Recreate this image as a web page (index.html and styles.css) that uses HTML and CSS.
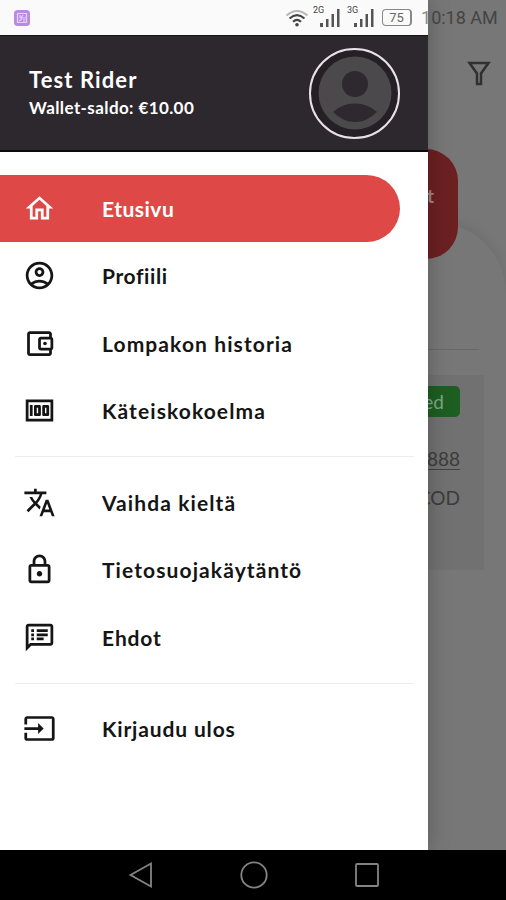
FILE: index.html
```html
<!DOCTYPE html>
<html lang="fi">
<head>
  <meta charset="UTF-8" />
  <meta name="viewport" content="width=device-width, initial-scale=1.0"/>
  <title>Etusivu</title>
  <link rel="stylesheet" href="styles.css">
</head>
<body>
  <div class="screen">

    <!-- page behind the drawer -->
    <main class="page">
      <div class="toolbar">
        <svg class="filter" viewBox="0 0 24 26"><path d="M2.500 3h19L14 13.500V24h-4V13.500z"/></svg>
      </div>
      <div class="tab">t</div>
      <div class="sheet">
        <div class="line"></div>
        <div class="card">
          <span class="status">Completed</span>
          <span class="phone">888888</span>
          <span class="payment">COD</span>
        </div>
      </div>
    </main>

    <aside class="drawer">
      <div class="status-space"></div>
      <header class="user">
        <div>
          <div class="name">Test Rider</div>
          <div class="wallet">Wallet-saldo: €10.00</div>
        </div>
        <div class="avatar">
          <svg viewBox="0 0 74 74">
            <circle cx="37" cy="37" r="36.500" fill="#4b494c"/>
            <circle cx="37" cy="28" r="13" fill="#2e282f"/>
            <path d="M15 56Q24 47.500 37 47.500T59 56Q49 66 37 66T15 56z" fill="#2e282f"/>
          </svg>
        </div>
      </header>

      <nav class="menu">
        <a class="item active">
          <svg viewBox="0 0 24 24"><path d="M12 5.690l5 4.500V18h-2v-6H9v6H7v-7.810l5-4.500M12 3L2 12h3v8h6v-6h2v6h6v-8h3L12 3z"/></svg>
          <span class="t-home">Etusivu</span>
        </a>
        <a class="item">
          <svg viewBox="0 0 24 24"><path d="M12 2C6.480 2 2 6.480 2 12s4.480 10 10 10 10-4.480 10-10S17.520 2 12 2zM7.350 18.500C8.660 17.560 10.260 17 12 17s3.340.56 4.650 1.500C15.340 19.440 13.740 20 12 20s-3.340-.56-4.650-1.500zm10.790-1.380C16.450 15.800 14.320 15 12 15s-4.450.8-6.140 2.120C4.700 15.730 4 13.950 4 12c0-4.420 3.580-8 8-8s8 3.580 8 8c0 1.950-.7 3.730-1.860 5.120zM12 6c-1.930 0-3.500 1.570-3.500 3.500S10.070 13 12 13s3.500-1.570 3.500-3.500S13.930 6 12 6zm0 5c-.83 0-1.500-.67-1.500-1.500S11.170 8 12 8s1.500.67 1.500 1.500S12.830 11 12 11z"/></svg>
          <span class="t-profile">Profiili</span>
        </a>
        <a class="item">
          <svg viewBox="0 0 24 24"><path d="M21 7.280V5c0-1.100-.9-2-2-2H5c-1.110 0-2 .9-2 2v14c0 1.100.89 2 2 2h14c1.100 0 2-.9 2-2v-2.280c.59-.35 1-.98 1-1.720V9c0-.74-.41-1.370-1-1.720zM20 9v6h-7V9h7zM5 19V5h14v2h-6c-1.100 0-2 .9-2 2v6c0 1.100.9 2 2 2h6v2H5z"/><circle cx="16" cy="12" r="1.300"/></svg>
          <span class="t-history">Lompakon historia</span>
        </a>
        <a class="item">
          <svg viewBox="0 0 24 24"><path d="M5 8h2v8H5zM12 8H9c-.55 0-1 .45-1 1v6c0 .55.45 1 1 1h3c.55 0 1-.45 1-1V9c0-.55-.45-1-1-1zm-1 6h-1v-4h1v4zM18 8h-3c-.55 0-1 .45-1 1v6c0 .55.450 1 1 1h3c.55 0 1-.45 1-1V9c0-.55-.45-1-1-1zm-1 6h-1v-4h1v4zM2 4v16h20V4H2zm2 14V6h16v12H4z"/></svg>
          <span class="t-cash">Käteiskokoelma</span>
        </a>
        <hr>
        <a class="item">
          <svg viewBox="0 0 24 24"><path d="M12.870 15.070l-2.540-2.510.03-.03c1.740-1.940 2.980-4.170 3.710-6.530H17V4h-7V2H8v2H1v1.990h11.170C11.500 7.920 10.440 9.750 9 11.350 8.070 10.320 7.300 9.190 6.690 8h-2c.73 1.630 1.730 3.170 2.980 4.560l-5.090 5.020L4 19l5-5 3.110 3.110.76-2.040zM18.500 10h-2L12 22h2l1.120-3h4.750L21 22h2l-4.500-12zm-2.620 7l1.620-4.330L19.120 17h-3.240z"/></svg>
          <span class="t-language">Vaihda kieltä</span>
        </a>
        <a class="item">
          <svg viewBox="0 0 24 24"><path d="M18 8h-1V6c0-2.760-2.240-5-5-5S7 3.240 7 6v2H6c-1.100 0-2 .9-2 2v10c0 1.100.9 2 2 2h12c1.100 0 2-.9 2-2V10c0-1.100-.9-2-2-2zM9 6c0-1.660 1.340-3 3-3s3 1.340 3 3v2H9V6zm9 14H6V10h12v10zm-6-3c1.100 0 2-.9 2-2s-.9-2-2-2-2 .9-2 2 .9 2 2 2z"/></svg>
          <span class="t-privacy">Tietosuojakäytäntö</span>
        </a>
        <a class="item">
          <svg viewBox="0 0 24 24"><path d="M20 2H4c-1.100 0-1.990.9-1.990 2L2 22l4-4h14c1.100 0 2-.9 2-2V4c0-1.100-.9-2-2-2zm0 14H5.170L4 17.170V4h16v12zM6 12h2v2H6zM6 9h2v2H6zM6 6h2v2H6zM10 12h5v2h-5zM10 9h8v2h-8zM10 6h8v2h-8z"/></svg>
          <span class="t-terms">Ehdot</span>
        </a>
        <hr>
        <a class="item">
          <svg viewBox="0 0 24 24"><path d="M21 3.010H3c-1.100 0-2 .9-2 2V9h2V4.990h18v14.030H3V15H1v4.010c0 1.100.9 1.980 2 1.980h18c1.100 0 2-.88 2-1.980v-14c0-1.110-.9-2-2-2zM11 16l4-4-4-4v3H1v2h10v3z"/></svg>
          <span class="t-logout">Kirjaudu ulos</span>
        </a>
      </nav>
    </aside>

    <div class="statusbar">
      <svg class="notice" viewBox="0 0 16 16">
        <rect width="16" height="16" rx="3.500" fill="#b98be0"/>
        <path d="M3.500 3.500h9v9h-9zM6 5v3M9 5l-2 3h5M5 11l3-2M10 9v3" fill="none" stroke="#e7d2f7" stroke-width="1.200"/>
      </svg>
      <svg class="wifi" viewBox="0 0 24 18">
        <path d="M1.500 6.500Q12-2.500 22.500 6.500" stroke="#b5b5b5"/>
        <path d="M4.500 9.500Q12 2.800 19.500 9.500M8 12.700Q12 9 16 12.700"/>
        <circle cx="12" cy="15.800" r="1.800"/>
      </svg>
      <div class="signal"><span>2G</span><svg viewBox="0 0 20 18"><path d="M0 14h3v4H0zM6 10h2.500v8H6zM11.500 5H14v13h-2.500zM17 0h2.500v18H17z"/></svg></div>
      <div class="signal"><span>3G</span><svg viewBox="0 0 20 18"><path d="M0 14h3v4H0zM6 10h2.500v8H6zM11.500 5H14v13h-2.500zM17 0h2.500v18H17z"/></svg></div>
      <div class="battery">75</div>
      <div class="clock"><span>1</span>0:18 AM</div>
    </div>

    <div class="navbar">
      <svg viewBox="0 0 28 28"><path d="M3.500 14L24 2.500v23z"/></svg>
      <svg viewBox="0 0 28 28"><circle cx="14" cy="14" r="12.700"/></svg>
      <svg viewBox="0 0 28 28"><rect x="3" y="3" width="22" height="22" rx="1"/></svg>
    </div>
  </div>
</body>
</html>
```
FILE: styles.css
```css
body {
  margin: 0;
  font-family: Lato, sans-serif;
  color: #151515;
}
.screen {
  position: relative;
  display: flex;
  flex-direction: column;
  width: 506px;
  height: 900px;
  overflow: hidden;
}

/* page behind the drawer */
.page {
  display: flex;
  flex-direction: column;
  align-items: flex-end;
  height: 850px;
  background: #777;
}
.toolbar {
  box-sizing: border-box;
  height: 149px;
  padding: 60px 15px 0 0;
}
.filter {
  display: block;
  width: 24px;
  height: 26px;
  fill: none;
  stroke: #303030;
  stroke-width: 2.5;
}
.tab {
  box-sizing: border-box;
  width: 90px;
  height: 110px;
  margin-right: 48px;
  padding: 35px 24px 0 0;
  border-radius: 32px;
  background: #6c2022;
  color: #a78384;
  font-size: 19px;
  font-weight: bold;
  text-align: right;
  z-index: 1;
}
.sheet {
  box-sizing: border-box;
  display: flex;
  flex-direction: column;
  align-items: flex-end;
  width: 506px;
  height: 627px;
  margin-top: -36px;
  padding: 126px 22px 0 0;
  border-radius: 0 70px 0 0;
  background: #777;
  box-shadow: 0 -4px 12px rgba(0, 0, 0, 0.07);
}
.line {
  width: 200px;
  height: 1px;
  margin-right: 5px;
  background: #686868;
}
.card {
  box-sizing: border-box;
  display: flex;
  flex-direction: column;
  align-items: flex-end;
  width: 460px;
  height: 195px;
  margin-top: 25px;
  padding: 11px 24px 0 0;
  background: #717171;
}
.status {
  box-sizing: border-box;
  height: 31px;
  padding: 0 16px;
  border-radius: 5px;
  background: #1d5e22;
  color: #83a585;
  font-size: 19px;
  line-height: 31px;
}
.phone, .payment {
  color: #3c3c3c;
  font-size: 19px;
  line-height: 20px;
}
.phone {
  margin-top: 32px;
  border-bottom: 1px solid #444;
}
.payment {
  margin-top: 18px;
}

/* drawer */
.drawer {
  position: absolute;
  top: 0;
  left: 0;
  z-index: 2;
  width: 428px;
  height: 850px;
  background: #fff;
  box-shadow: 0 0 20px rgba(0, 0, 0, 0.25);
}
.status-space {
  height: 35px;
  background: #fafafa;
}
.user {
  box-sizing: border-box;
  display: flex;
  justify-content: space-between;
  align-items: center;
  height: 117px;
  padding: 0 28px 0 29px;
  border-top: 1px solid #151216;
  border-bottom: 2px solid #0c0a0d;
  background: #2d272e;
  color: #fff;
  font-weight: bold;
}
.name {
  padding-top: 2px;
  font-size: 22px;
  line-height: 28px;
  letter-spacing: 1.1px;
}
.wallet {
  font-size: 17px;
  line-height: 28px;
  letter-spacing: 0.4px;
}
.avatar {
  box-sizing: border-box;
  display: flex;
  justify-content: center;
  align-items: center;
  width: 91px;
  height: 91px;
  border: 2px solid #e9e0e8;
  border-radius: 50%;
  background: #252026;
}
.avatar svg {
  width: 74px;
  height: 74px;
}
.menu {
  padding-top: 23px;
}
.item {
  box-sizing: border-box;
  display: flex;
  align-items: center;
  gap: 46px;
  width: 400px;
  height: 67.5px;
  padding: 0 0 1px 23px;
  font-size: 21px;
  font-weight: bold;
}
.item svg {
  width: 33px;
  height: 33px;
  fill: currentColor;
}
.item.active {
  height: 67px;
  margin-bottom: 0.5px;
  padding-bottom: 0;
  border-radius: 0 34px 34px 0;
  background: #de4947;
  color: #fff;
}
.menu hr {
  height: 1px;
  margin: 11px 14px 12px 15px;
  border: 0;
  background: #ededed;
}

.t-home {
  letter-spacing: 0.5px;
}
.t-profile {
  letter-spacing: 0.6px;
}
.t-terms, .t-logout {
  letter-spacing: 0.85px;
}
.t-history, .t-cash, .t-language, .t-privacy {
  letter-spacing: 1.1px;
}

/* system bars */
.statusbar {
  position: absolute;
  top: 0;
  left: 0;
  z-index: 3;
  box-sizing: border-box;
  display: flex;
  align-items: center;
  width: 506px;
  height: 35px;
  padding-left: 14px;
  color: #444;
  font-family: Roboto, sans-serif;
}
.notice {
  width: 16px;
  height: 16px;
}
.wifi {
  width: 24px;
  height: 18px;
  margin-left: 255px;
  fill: none;
  stroke: #444;
  stroke-width: 2;
}
.wifi circle {
  fill: #444;
  stroke: none;
}
.signal {
  display: flex;
  align-items: flex-start;
  width: 34px;
  height: 18px;
}
.signal span {
  width: 13px;
  margin: -4px -6px 0 4px;
  font-size: 9px;
  line-height: 10px;
}
.signal svg {
  width: 20px;
  height: 18px;
  fill: #555;
  flex-shrink: 0;
}
.battery {
  box-sizing: border-box;
  width: 30px;
  height: 17px;
  margin-left: 5px;
  border: 1px solid #888;
  border-right-width: 2px;
  border-radius: 4px;
  color: #666;
  font-size: 13px;
  line-height: 16px;
  text-align: center;
}
.clock {
  margin-left: 9px;
  font-size: 18px;
  white-space: nowrap;
}
.clock span {
  color: #888;
}
.navbar {
  display: flex;
  justify-content: center;
  align-items: center;
  gap: 85px;
  height: 50px;
  padding-left: 1px;
  background: #000;
}
.navbar svg {
  width: 28px;
  height: 28px;
  fill: none;
  stroke: #858585;
  stroke-width: 1.8;
}
```
